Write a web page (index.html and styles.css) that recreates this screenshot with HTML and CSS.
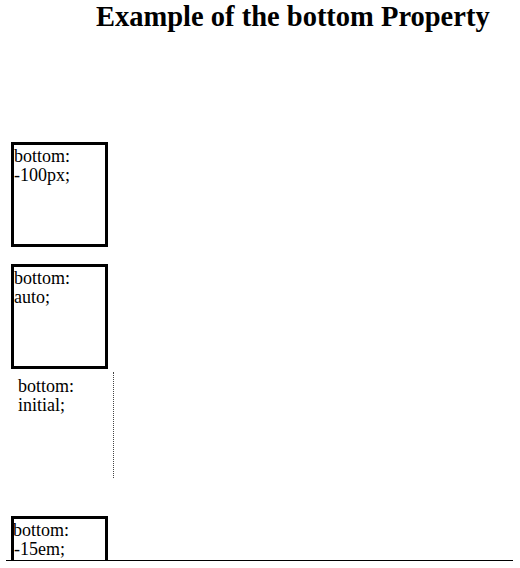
FILE: index.html
```html
<!DOCTYPE html>
<html lang="en">
  <head>
    <meta charset="UTF-8" />
    <title>Example of the bottom Property</title>
    <link rel="stylesheet" href="styles.css">
  </head>
  <body>
    <div class="page">
      <h1 class="title">Example of the bottom Property</h1>

      <div class="stage">
        <div class="box box-px">bottom: -100px;</div>
        <div class="box box-auto">bottom: auto;</div>
        <div class="box-initial">bottom: initial;</div>
        <div class="box box-em">bottom: -15em;</div>
      </div>
    </div>
  </body>
</html>
```

FILE: styles.css
```css
* {
  margin: 0;
  padding: 0;
  box-sizing: border-box;
}

body {
  background-color: #ffffff;
  color: #000000;
  font-family: "Liberation Serif", "Times New Roman", serif;
}

.page {
  padding: 0 7px 0 6px;
}

.title {
  font-size: 28.5px;
  font-weight: bold;
  line-height: 34px;
  height: 34px;
  padding-left: 90px;
  white-space: nowrap;
}

.stage {
  height: 527px;
  overflow: hidden;
  border-bottom: 1px solid #000000;
}

.box {
  width: 97px;
  height: 105px;
  margin-left: 5px;
  border: 3px solid #000000;
  font-size: 18px;
  line-height: 19px;
  padding-top: 2px;
}

.box-px {
  margin-top: 108px;
}

.box-auto {
  margin-top: 17px;
}

.box-initial {
  width: 101px;
  height: 106px;
  margin-top: 3px;
  margin-left: 7px;
  padding: 5px 0 0 5px;
  border-right: 1px dotted #444444;
  font-size: 18px;
  line-height: 19px;
}

.box-em {
  margin-top: 38px;
  text-indent: -1px;
}
```
